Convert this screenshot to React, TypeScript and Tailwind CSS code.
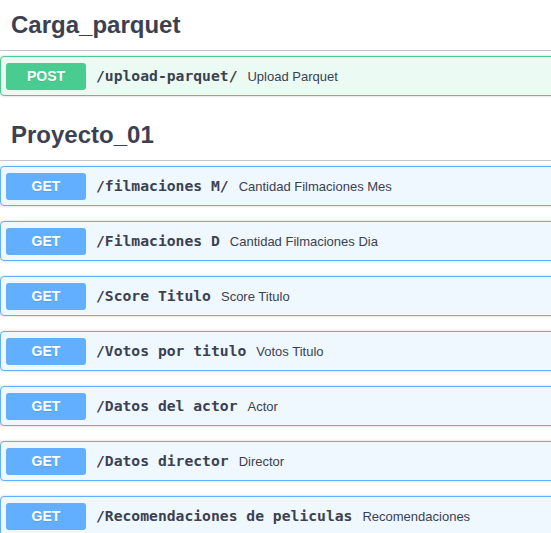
const sections = [
  {
    name: 'Carga_parquet',
    ops: [{ method: 'POST', path: '/upload-parquet/', desc: 'Upload Parquet' }],
  },
  {
    name: 'Proyecto_01',
    ops: [
      { method: 'GET', path: '/filmaciones M/', desc: 'Cantidad Filmaciones Mes' },
      { method: 'GET', path: '/Filmaciones D', desc: 'Cantidad Filmaciones Dia' },
      { method: 'GET', path: '/Score Titulo', desc: 'Score Titulo' },
      { method: 'GET', path: '/Votos por titulo', desc: 'Votos Titulo' },
      { method: 'GET', path: '/Datos del actor', desc: 'Actor' },
      { method: 'GET', path: '/Datos director', desc: 'Director' },
      { method: 'GET', path: '/Recomendaciones de peliculas', desc: 'Recomendaciones' },
    ],
  },
];

function OpBlock({ method, path, desc }: { method: string; path: string; desc: string }) {
  const post = method === 'POST';
  return (
    <div
      className={
        post
          ? 'mb-[15px] h-[40px] rounded-[4px] border border-[#49cc90] bg-[#ecfaf4] shadow-[0_0_3px_rgba(0,0,0,0.19)]'
          : 'mb-[15px] h-[40px] rounded-[4px] border border-[#61affe] bg-[#eff7ff] shadow-[0_0_3px_rgba(0,0,0,0.19)]'
      }
    >
      <div className="flex h-full items-center p-[5px]">
        <span
          className={
            post
              ? 'flex h-[27px] w-[80px] shrink-0 items-center justify-center rounded-[3px] bg-[#49cc90] pt-px text-[14px] font-bold text-white [text-shadow:0_1px_0_rgba(0,0,0,0.1)]'
              : 'flex h-[27px] w-[80px] shrink-0 items-center justify-center rounded-[3px] bg-[#61affe] pt-px text-[14px] font-bold text-white [text-shadow:0_1px_0_rgba(0,0,0,0.1)]'
          }
        >
          {method}
        </span>
        <span className="px-[10px] pt-px font-['DejaVu_Sans_Mono',monospace] text-[14.7px] font-bold whitespace-pre text-[#3b4151]">
          {path}
        </span>
        <span className="pt-px text-[13px] text-[#3b4151]">{desc}</span>
      </div>
    </div>
  );
}

export default function App() {
  return (
    <div className="h-[533px] w-[551px] overflow-hidden bg-white font-['Liberation_Sans',Arial,sans-serif]">
      <div className="w-[580px] pt-px">
        {sections.map((s) => (
          <div key={s.name}>
            <h3 className="mb-[5px] flex h-[50px] items-center border-b border-[#c4c6cb] pb-[2px] pl-[11px] text-[24px] font-bold text-[#3b4151]">
              {s.name}
            </h3>
            {s.ops.map((op) => (
              <OpBlock key={op.path} {...op} />
            ))}
          </div>
        ))}
      </div>
    </div>
  );
}
